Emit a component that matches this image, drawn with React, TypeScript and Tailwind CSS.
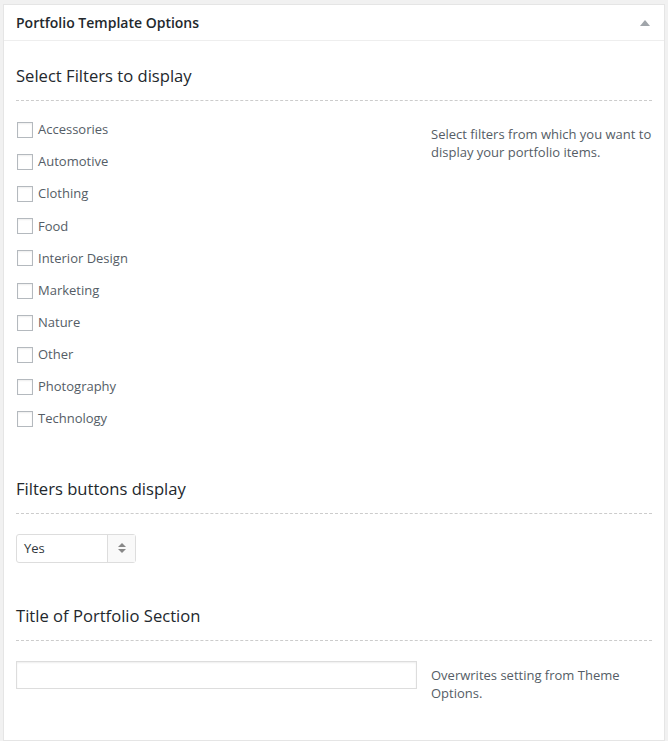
const FILTERS = [
  "Accessories",
  "Automotive",
  "Clothing",
  "Food",
  "Interior Design",
  "Marketing",
  "Nature",
  "Other",
  "Photography",
  "Technology",
];

/* ── Small pieces ──────────────────────────────────────────────────────── */

function SectionTitle({ children }: { children: React.ReactNode }) {
  return (
    <h3 className="text-[16.6px] leading-[24px] text-[#23282d] pb-[12px] border-b border-dashed border-[#cccccc]">
      {children}
    </h3>
  );
}

function Checkbox({ label }: { label: string }) {
  return (
    <label className="flex h-[32.1px] items-center">
      <span className="ml-[1px] w-[16px] h-[16px] border border-[#b4b9be] bg-white shadow-[inset_0_1px_2px_rgba(0,0,0,0.07)]" />
      <span className="ml-[5px] text-[13px] text-[#555d66]">{label}</span>
    </label>
  );
}

function SelectBox() {
  return (
    <div className="flex w-[120px] h-[29px] border border-[#dddddd] rounded-[3px] bg-white">
      <div className="flex-1 flex items-center pl-[7px] text-[13px] text-[#32373c]">Yes</div>
      <div className="w-[28px] flex items-center justify-center border-l border-[#dddddd] bg-[#f9f9f9]">
        <svg width="10" height="12" viewBox="0 0 10 12" fill="#888888">
          <path d="M5 1L9 5H1Z" />
          <path d="M5 11L1 7H9Z" />
        </svg>
      </div>
    </div>
  );
}

/* ── Page ──────────────────────────────────────────────────────────────── */

export default function App() {
  return (
    <div className="min-h-screen bg-[#f1f1f1] pt-[4px] pl-[3px] pr-[3px]" style={{ fontFamily: '"Open Sans", sans-serif' }}>
      <div className="h-[737px] border border-[#e5e5e5] bg-white">
        {/* ── Header ─────────────────────────────────────── */}
        <div className="flex h-[36px] items-center justify-between border-b border-[#eeeeee] pl-[12px] pr-[14px]">
          <h2 className="text-[14px] font-semibold text-[#23282d]">Portfolio Template Options</h2>
          <svg width="10" height="6" viewBox="0 0 10 6" fill="#a0a5aa">
            <path d="M5 0L10 6H0Z" />
          </svg>
        </div>

        <div className="px-[12px]">
          {/* ── Filters ──────────────────────────────────── */}
          <div className="pt-[23px]">
            <SectionTitle>Select Filters to display</SectionTitle>
            <div className="grid grid-cols-[415px_1fr] mt-[13px]">
              <div className="flex flex-col">
                {FILTERS.map((f) => (
                  <Checkbox key={f} label={f} />
                ))}
              </div>
              <p className="mt-[11px] text-[13px] leading-[18px] text-[#555d66]">
                Select filters from which you want to display your portfolio items.
              </p>
            </div>
          </div>

          {/* ── Buttons display ──────────────────────────── */}
          <div className="pt-[42px]">
            <SectionTitle>Filters buttons display</SectionTitle>
            <div className="mt-[20px]">
              <SelectBox />
            </div>
          </div>

          {/* ── Section title ────────────────────────────── */}
          <div className="pt-[41px]">
            <SectionTitle>Title of Portfolio Section</SectionTitle>
            <div className="grid grid-cols-[415px_1fr] mt-[20px]">
              <div>
                <input
                  type="text"
                  className="w-[401px] h-[28px] border border-[#dddddd] bg-white shadow-[inset_0_1px_2px_rgba(0,0,0,0.07)] outline-none"
                />
              </div>
              <p className="mt-[5px] text-[13px] leading-[18px] text-[#555d66]">
                Overwrites setting from Theme Options.
              </p>
            </div>
          </div>
        </div>
      </div>
    </div>
  );
}
